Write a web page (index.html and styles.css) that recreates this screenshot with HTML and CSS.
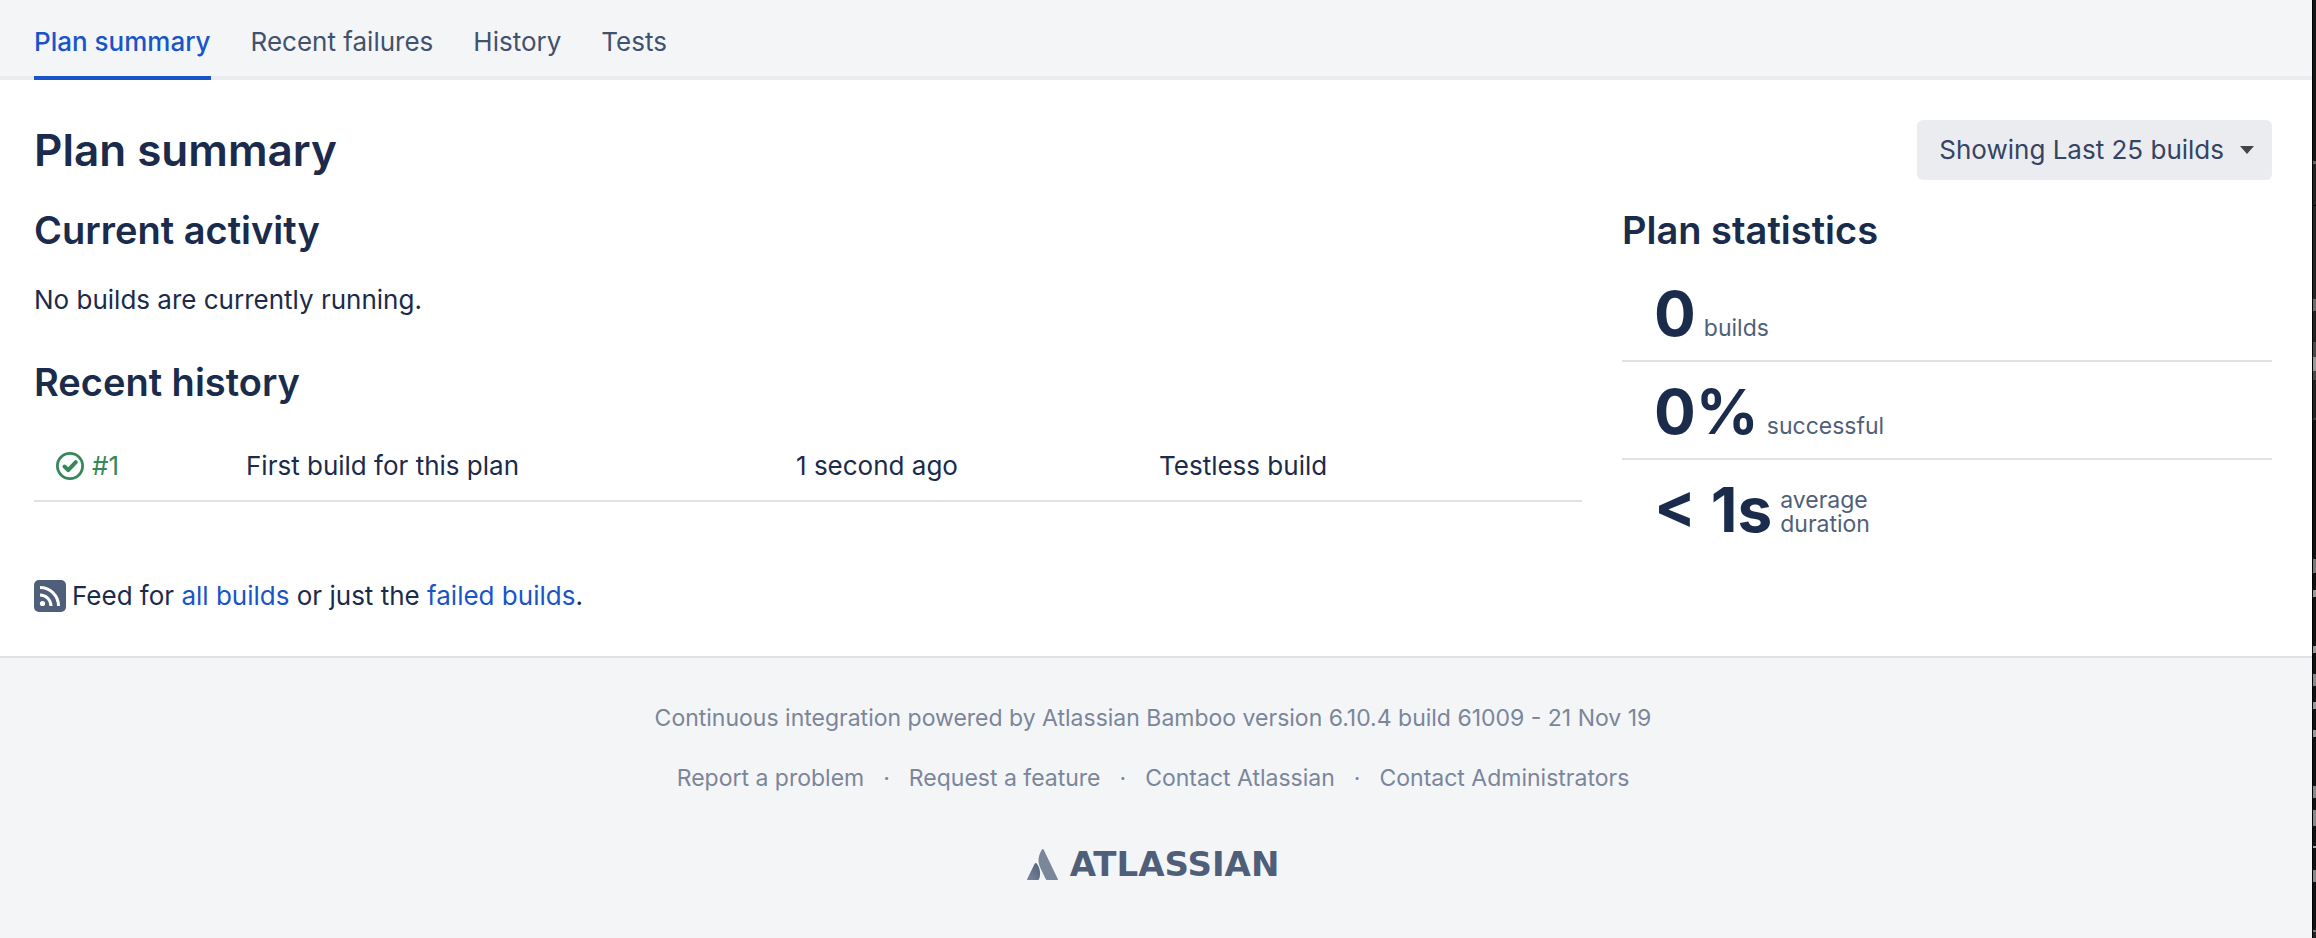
FILE: index.html
```html
<!DOCTYPE html>
<html lang="en">
<head>
<meta charset="utf-8">
<title>Plan summary</title>
<link rel="stylesheet" href="styles.css">
</head>
<body>
<div class="page">
  <nav class="tabs" aria-label="Plan">
    <a class="tab tab-active" href="#summary" aria-current="page">Plan summary</a>
    <a class="tab" href="#failures">Recent failures</a>
    <a class="tab" href="#history">History</a>
    <a class="tab" href="#tests">Tests</a>
  </nav>
  <main class="content">
    <header class="heading">
      <h1>Plan summary</h1>
      <button class="range" type="button">Showing Last 25 builds <span class="caret"></span></button>
    </header>
    <div class="columns">
      <div class="primary">
        <section>
          <h2>Current activity</h2>
          <p class="activity">No builds are currently running.</p>
        </section>
        <section>
          <h2>Recent history</h2>
          <table class="history">
            <tbody>
              <tr>
                <td class="col-build">
                  <a class="build" href="#build-1">
                    <svg class="build-icon" viewBox="0 0 28 28" aria-hidden="true"><circle cx="14" cy="14" r="12.6" fill="none" stroke="currentColor" stroke-width="2.8"/><path d="M8.500 14.500l3.700 3.700 7.600-8" fill="none" stroke="currentColor" stroke-width="4" stroke-linecap="round" stroke-linejoin="round"/></svg>
                    #1</a>
                </td>
                <td class="col-reason">First build for this plan</td>
                <td class="col-time">1 second ago</td>
                <td>Testless build</td>
              </tr>
            </tbody>
          </table>
        </section>
        <p class="feed">
          <svg class="feed-icon" viewBox="0 0 32 32" aria-hidden="true"><rect width="32" height="32" rx="5" fill="#505f79"/><circle cx="8.5" cy="23.5" r="2.6" fill="#fff"/><path d="M6 15a11 11 0 0 1 11 11M6 7.500A18.500 18.500 0 0 1 24.500 26" fill="none" stroke="#fff" stroke-width="3"/></svg>
          <span>Feed for <a href="#all">all builds</a> or just the <a href="#failed">failed builds</a>.</span>
        </p>
      </div>
      <aside class="stats">
        <h2>Plan statistics</h2>
        <ul class="stat-list">
          <li><strong>0</strong><span>builds</span></li>
          <li><strong>0%</strong><span>successful</span></li>
          <li><strong>&lt; 1s</strong><span>average<br>duration</span></li>
        </ul>
      </aside>
    </div>
  </main>
  <footer class="footer">
    <p>Continuous integration powered by Atlassian Bamboo version 6.10.4 build 61009 - 21 Nov 19</p>
    <ul class="footer-links">
      <li><a href="#report">Report a problem</a></li>
      <li><a href="#request">Request a feature</a></li>
      <li><a href="#contact">Contact Atlassian</a></li>
      <li><a href="#admins">Contact Administrators</a></li>
    </ul>
    <a class="brand" href="#atlassian">
      <svg class="brand-mark" viewBox="0 0 31 31" aria-hidden="true"><defs><linearGradient id="fold" x1="1" y1="0" x2="0" y2="1"><stop offset="0" stop-color="#505f79"/><stop offset="1" stop-color="#7a869a"/></linearGradient></defs><path d="M8.500 14q-.6.300-1 1L.2 30q-.4 1 .6 1H11q.7 0 1-.8c2.200-4.800 1-12-2.500-16q-.5-.5-1-.2z" fill="url(#fold)"/><path d="M15 .5c-4 6.500-4.600 12.500-1.600 18.500l5.400 11.200q.4.800 1.200.8h10.300q1 0 .5-1L16.600.6q-.8-1.200-1.600-.1z" fill="#7a869a"/></svg>
      <span>ATLASSIAN</span>
    </a>
  </footer>
</div>
<div class="edge"></div>
</body>
</html>
```
FILE: styles.css
```css
* { box-sizing: border-box; }
body {
  margin: 0;
  min-height: 100vh;
  display: flex;
  background: #f4f5f7;
  color: #1b2b4b;
  font: 26px/40px Inter, "Liberation Sans", sans-serif;
}
h1, h2, p, ul { margin: 0; padding: 0; }
ul { list-style: none; }
a { color: #1955c9; text-decoration: none; }
.page { flex: 1; display: flex; flex-direction: column; }

/* strip of the dark window behind the page */
.edge {
  width: 4px;
  border-left: 1px solid #000;
  background: linear-gradient(
    #161616 161px, #666 161px 164px, #222 164px 205px, #000 205px 206px,
    #242424 206px 299px, #6c6c6c 299px 311px, #222 311px 342px,
    #4a4a4a 342px 357px, #999 357px 371px, #4a4a4a 371px 380px,
    #222 380px 418px, #3c3c3c 418px 420px, #111 420px 559px,
    #777 559px 573px, #111 573px 590px, #999 590px 597px, #111 597px 646px,
    #999 646px 653px, #111 653px 674px, #888 674px 686px, #111 686px 702px,
    #999 702px 709px, #111 709px 730px, #999 730px 737px, #111 737px 786px,
    #888 786px 798px, #111 798px 810px, #888 810px 826px, #111 826px 846px,
    #aaa 846px 848px, #111 848px 870px, #888 870px 882px, #111 882px 930px,
    #777 930px 932px, #222 932px);
}

.tabs {
  display: flex;
  gap: 40px;
  height: 80px;
  padding: 0 34px;
  border-bottom: 4px solid #ebecf0;
}
.tab {
  height: 80px;
  padding-top: 22px;
  border-bottom: 4px solid transparent;
  color: #42526e;
}
.tab-active { color: #1955c9; border-color: #1955c9; font-weight: 500; }

.content {
  padding: 40px 40px 40px 34px;
  background: #fff;
  border-bottom: 2px solid #dfe1e6;
}
.heading { display: flex; justify-content: space-between; align-items: center; height: 60px; }
h1 { font-size: 44px; line-height: 56px; font-weight: 600; }
h2 { font-size: 38px; line-height: 48px; font-weight: 600; }
.range {
  display: flex;
  align-items: center;
  gap: 16px;
  height: 60px;
  padding: 0 18px 0 22px;
  border: 0;
  border-radius: 6px;
  background: #ebecf0;
  color: #344563;
  font: inherit;
}
.caret {
  border: 7px solid transparent;
  border-top: 8px solid #444;
  border-bottom: 0;
}
.columns { display: grid; grid-template-columns: minmax(0, 1548fr) minmax(0, 650fr); gap: 40px; padding-top: 26px; }
.activity { padding: 26px 0 38px; }
.history { width: 100%; margin-top: 26px; border-collapse: collapse; table-layout: fixed; }
.history td { padding: 14px 22px; border-bottom: 2px solid #dfe1e6; }
.col-build { width: 190px; }
.col-reason { width: 550px; }
.col-time { width: 363px; }
.build { display: flex; align-items: center; gap: 8px; color: #36875a; }
.build-icon { width: 28px; height: 28px; }
.feed { display: flex; align-items: center; gap: 6px; padding-top: 74px; }
.feed-icon { width: 32px; height: 32px; }

.stat-list { padding-top: 10px; }
.stat-list li {
  display: flex;
  align-items: last baseline;
  gap: 8px;
  height: 98px;
  padding: 0 32px 14px;
  border-bottom: 2px solid #dfe1e6;
}
.stat-list li:last-child { border-color: transparent; }
.stat-list strong { font-size: 62px; line-height: 64px; }
.stat-list span { font-size: 23px; line-height: 24px; color: #505f79; }

.footer { padding: 40px 6px 0 0; text-align: center; font-size: 23px; color: #7a869a; }
.footer a { color: #7a869a; }
.footer-links { display: flex; justify-content: center; padding-top: 20px; }
.footer-links li + li::before { content: "·"; padding: 0 19px; }
.footer .brand {
  display: flex;
  justify-content: center;
  align-items: center;
  gap: 12px;
  padding-top: 46px;
  color: #505f79;
  font: bold 34px/40px "DejaVu Sans", sans-serif;
}
.brand-mark { width: 31px; height: 31px; }
```
